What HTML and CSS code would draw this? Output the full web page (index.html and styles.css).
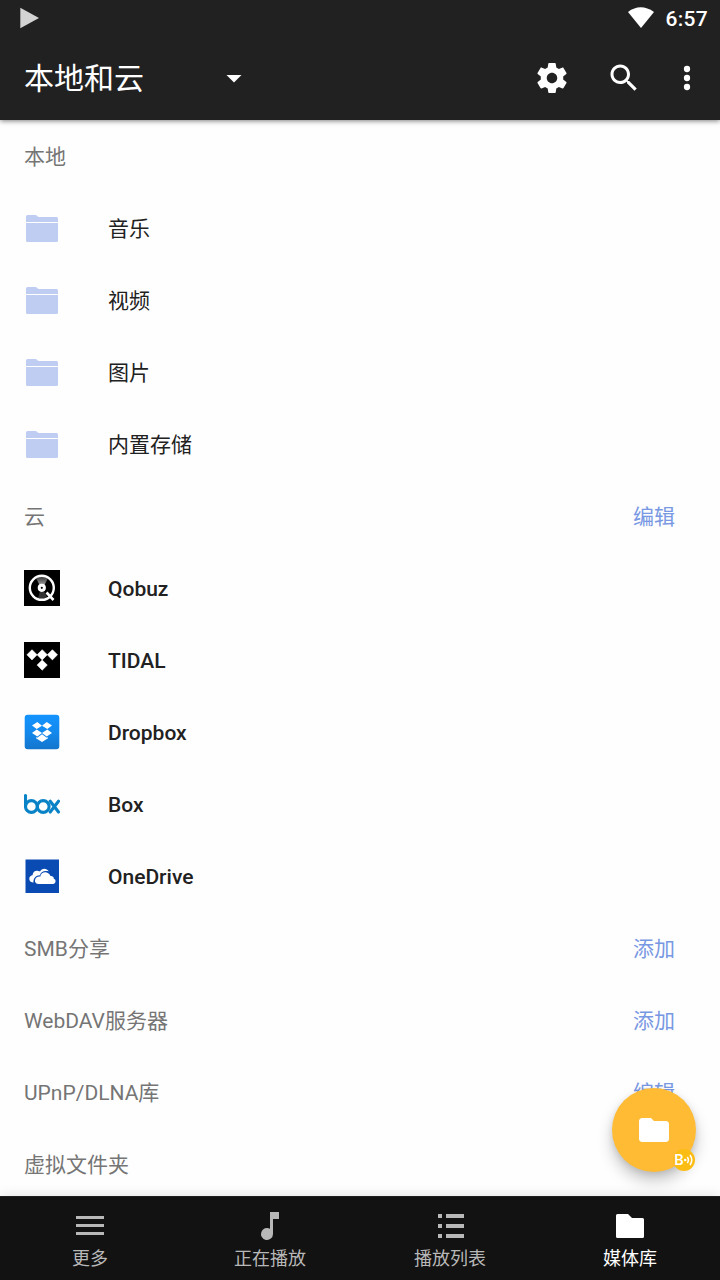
FILE: index.html
```html
<!DOCTYPE html>
<html lang="zh-CN">
<head>
    <meta charset="UTF-8">
    <meta name="viewport" content="width=device-width, initial-scale=1.0">
    <title>本地和云</title>
    <link rel="stylesheet" href="styles.css">
</head>
<body>

<!-- Shared icons -->
<svg class="defs" width="0" height="0">
    <symbol id="folder-split" viewBox="0 0 36 36">
        <path d="M2 7V6.500Q2 5 3.500 5H12L14.500 7H32.500Q34 7 34 8.500V12H2z"/>
        <path d="M2 13H34V30.500Q34 32 32.500 32H3.500Q2 32 2 30.500z"/>
    </symbol>
</svg>

<header>
    <div class="status-bar">
        <svg class="play" width="20" height="22" viewBox="0 0 20 22"><path d="M.3.700L19 11 .3 21.300z"/></svg>
        <svg class="wifi" width="28" height="22" viewBox="0 0 28 22"><path d="M1 5Q13.500-4.300 27 5L14 21z"/></svg>
        <span class="clock">6:57</span>
    </div>
    <div class="toolbar">
        <h1>本地和云</h1>
        <svg class="icon arrow" viewBox="0 0 24 24"><path d="M7 10l5 5 5-5z"/></svg>
        <svg class="icon settings" viewBox="0 0 24 24"><path d="M19.430 12.980c.04-.32.070-.64.070-.98s-.03-.66-.07-.98l2.110-1.650c.19-.15.240-.42.120-.64l-2-3.460c-.12-.22-.39-.3-.61-.22l-2.490 1c-.52-.4-1.080-.73-1.690-.98l-.38-2.650C14.460 2.180 14.250 2 14 2h-4c-.25 0-.46.180-.49.420l-.38 2.650c-.61.250-1.170.590-1.690.980l-2.490-1c-.23-.09-.49 0-.61.220l-2 3.460c-.13.220-.07.490.12.640l2.110 1.650c-.04.320-.07.650-.07.980s.03.660.070.980l-2.110 1.650c-.19.150-.24.420-.12.640l2 3.460c.12.220.39.300.61.220l2.490-1c.52.400 1.080.730 1.690.980l.38 2.650c.03.240.240.420.490.420h4c.25 0 .46-.18.490-.42l.38-2.650c.61-.25 1.170-.59 1.690-.98l2.490 1c.23.090.49 0 .61-.22l2-3.460c.12-.22.070-.49-.12-.64l-2.110-1.650zM12 15.500c-1.930 0-3.500-1.570-3.500-3.500s1.570-3.500 3.500-3.500 3.500 1.570 3.500 3.500-1.570 3.500-3.500 3.500z"/></svg>
        <svg class="icon search" viewBox="0 0 24 24"><path d="M15.500 14h-.79l-.28-.27C15.410 12.590 16 11.110 16 9.500 16 5.910 13.090 3 9.500 3S3 5.910 3 9.500 5.910 16 9.500 16c1.610 0 3.090-.59 4.230-1.570l.27.280v.79l5 4.990L20.490 19l-4.990-5zm-6 0C7.010 14 5 11.990 5 9.500S7.010 5 9.500 5 14 7.010 14 9.500 11.990 14 9.500 14z"/></svg>
        <svg class="icon more" viewBox="0 0 24 24"><circle cx="12" cy="6" r="2.100"/><circle cx="12" cy="12" r="2.100"/><circle cx="12" cy="18" r="2.100"/></svg>
    </div>
</header>

<main>
    <div class="row section"><span>本地</span></div>
    <div class="row"><svg class="icon folder"><use href="#folder-split"/></svg><span>音乐</span></div>
    <div class="row"><svg class="icon folder"><use href="#folder-split"/></svg><span>视频</span></div>
    <div class="row"><svg class="icon folder"><use href="#folder-split"/></svg><span>图片</span></div>
    <div class="row"><svg class="icon folder"><use href="#folder-split"/></svg><span>内置存储</span></div>

    <div class="row section"><span>云</span><a href="#">编辑</a></div>
    <div class="row cloud">
        <svg class="icon" viewBox="0 0 36 36">
            <defs>
                <linearGradient id="shine" x1="0" y1="0" x2="0" y2="1"><stop offset="0" stop-color="#333"/><stop offset="1" stop-color="#aaa"/></linearGradient>
            </defs>
            <rect width="36" height="36"/>
            <path d="M12 8Q18 5 24 8L20 16H16z" fill="url(#shine)"/>
            <path d="M16 21H20L23 27Q18 30 14 28z" fill="#333"/>
            <circle cx="17.800" cy="17.800" r="12" fill="none" stroke="#fff" stroke-width="2.400"/>
            <circle cx="17.800" cy="17.800" r="2.600" fill="none" stroke="#fff" stroke-width="3"/>
            <path d="M22.500 22.500L29.500 30" stroke="#fff" stroke-width="2.600"/>
        </svg>
        <span>Qobuz</span>
    </div>
    <div class="row cloud">
        <svg class="icon" viewBox="0 0 36 36">
            <rect width="36" height="36"/>
            <path fill="#fff" stroke="#fff" stroke-width=".6" d="M8 7.700l5.100 5.100L8 17.900l-5.100-5.100zM18.200 7.700l5.100 5.100-5.100 5.100-5.100-5.100zM28.400 7.700l5.100 5.100-5.100 5.100-5.100-5.100zM18.200 18l5.100 5.100-5.100 5.100-5.100-5.100z"/>
        </svg>
        <span>TIDAL</span>
    </div>
    <div class="row cloud">
        <svg class="icon" viewBox="0 0 36 36">
            <defs>
                <linearGradient id="blue" x1="0" y1="0" x2="0" y2="1"><stop offset="0" stop-color="#1494ff"/><stop offset=".5" stop-color="#1389ed"/><stop offset="1" stop-color="#1475cc"/></linearGradient>
            </defs>
            <rect x=".7" y=".7" width="34.600" height="34.600" rx="3" fill="url(#blue)"/>
            <path fill="#fff" d="M13.300 8L18 11.700 12.700 15 8 11.500zM22.700 8L28 11.500 23.300 15 18 11.700zM12.700 15.500L18 19 13.300 22.500 8 19zM23.300 15.500L28 19 22.700 22.500 18 19zM18 20.300L22.800 23.800 24 23.200V24.200L18 28 12 24.200V23.200L13.200 23.800z"/>
        </svg>
        <span>Dropbox</span>
    </div>
    <div class="row cloud">
        <svg class="icon" viewBox="0 0 36 36">
            <g fill="none" stroke="#0a83c6" stroke-width="3.100" stroke-linecap="round">
                <path d="M1.500 9.500V20.500"/>
                <circle cx="7.400" cy="20.500" r="5.900"/>
                <circle cx="19.200" cy="20.500" r="5.900"/>
                <path d="M26.200 15.200L34.500 26M34.500 15.200L26.200 26"/>
            </g>
        </svg>
        <span>Box</span>
    </div>
    <div class="row cloud">
        <svg class="icon" viewBox="0 0 36 36">
            <rect x="1.500" y="1.500" width="33.500" height="33.500" fill="#0a4bb3"/>
            <path fill="#fff" d="M9.500 24.500C6.500 24.800 5 22.500 5.300 20.300 5.500 18.500 7 17.300 8.500 17.200 9 14 11 12.500 13.500 12.800 14.800 13 15.500 13.500 16 13.500 17.500 10 22.500 9.500 24.800 13.300 20 12 16.500 14 16 17.200 12 17 9 20.500 9.500 24.500z"/>
            <path fill="#fff" d="M15.500 26C12 26 10.800 24.200 11 22.200 11.200 19.500 13.500 18.200 16.300 18.500 17 13.500 24.200 12.500 26.500 18 29 17.800 30 19.300 29.800 20.800 32.500 21.500 32 26 29 26z"/>
        </svg>
        <span>OneDrive</span>
    </div>

    <div class="row section"><span>SMB分享</span><a href="#">添加</a></div>
    <div class="row section"><span>WebDAV服务器</span><a href="#">添加</a></div>
    <div class="row section"><span>UPnP/DLNA库</span><a href="#">编辑</a></div>
    <div class="row section"><span>虚拟文件夹</span></div>
</main>

<button class="fab">
    <svg class="icon" viewBox="0 0 24 24"><path d="M10 4H4c-1.100 0-1.990.9-1.990 2L2 18c0 1.100.9 2 2 2h16c1.100 0 2-.9 2-2V8c0-1.100-.9-2-2-2h-8l-2-2z"/></svg>
    <span class="badge">B<svg width="10" height="14" viewBox="0 0 10 14"><circle cx="1.200" cy="7" r="1.300"/><path d="M3.300 4Q5.500 7 3.300 10M6 2Q9.600 7 6 12"/></svg></span>
</button>

<nav>
    <a href="#">
        <svg width="36" height="36" viewBox="0 0 36 36"><path d="M4 8h28v3H4zM4 16h28v3H4zM4 24h28v3H4z"/></svg>
        <span>更多</span>
    </a>
    <a href="#">
        <svg width="36" height="36" viewBox="0 0 36 36"><path d="M18 4h9v7h-6v15a6 6 0 1 1-3-5.200z"/></svg>
        <span>正在播放</span>
    </a>
    <a href="#">
        <svg width="36" height="36" viewBox="0 0 36 36"><path d="M6 6h4v4H6zM14 6h18v4H14zM6 16h4v4H6zM14 16h18v4H14zM6 26h4v4H6zM14 26h18v4H14z"/></svg>
        <span>播放列表</span>
    </a>
    <a href="#" class="active">
        <svg width="36" height="36" viewBox="0 0 36 36"><path d="M5.500 6H16L20 10H30.500Q32 10 32 11.500V28.500Q32 30 30.500 30H5.500Q4 30 4 28.500V7.500Q4 6 5.500 6z"/></svg>
        <span>媒体库</span>
    </a>
</nav>

</body>
</html>
```

FILE: styles.css
```css
body {
    font-family: Roboto, "Noto Sans CJK SC", sans-serif;
    margin: 0;
    height: 100vh;
    display: flex;
    flex-direction: column;
    overflow: hidden;
    background-color: #fefefe;
    color: #212121;
}
.defs {
    position: absolute;
}
a {
    text-decoration: none;
}
.icon {
    width: 36px;
    height: 36px;
    flex: none;
}
header {
    height: 120px;
    flex: none;
    background-color: #212121;
    color: #fff;
    fill: #fff;
    box-shadow: 0 1px 5px rgba(0, 0, 0, 0.5);
    z-index: 1;
}
.status-bar {
    height: 36px;
    display: flex;
    align-items: center;
    padding: 0 12px 0 20px;
}
.play {
    fill: #d3d3d3;
}
.wifi {
    margin-left: auto;
    margin-right: 10px;
}
.clock {
    font-size: 21px;
    font-weight: 500;
    letter-spacing: 0.3px;
    line-height: 36px;
    padding-top: 2px;
}
.toolbar {
    height: 84px;
    display: flex;
    align-items: center;
    padding: 0 15px 0 24px;
}
h1 {
    width: 192px;
    margin: 0;
    padding-top: 2px;
    font-size: 30px;
    font-weight: 400;
    line-height: 44px;
}
.settings {
    margin-left: auto;
}
.search {
    margin-left: 36px;
}
.more {
    margin-left: 27px;
}
main {
    flex: 1;
    min-height: 0;
    overflow: hidden;
}
.row {
    height: 72px;
    box-sizing: border-box;
    padding: 0 45px 0 24px;
    display: flex;
    align-items: center;
    font-size: 21px;
    line-height: 30px;
}
.row span,
.row a {
    padding-top: 2px;
}
.row .icon {
    margin-right: 48px;
}
.folder {
    fill: #bfcdf3;
}
.cloud {
    font-weight: 500;
}
.section {
    justify-content: space-between;
    color: #757575;
}
.section a {
    color: #7898e3;
}
.fab {
    position: absolute;
    right: 24px;
    bottom: 108px;
    width: 84px;
    height: 84px;
    padding: 0;
    border: none;
    border-radius: 50%;
    background-color: #ffbb33;
    fill: #fff;
    display: flex;
    align-items: center;
    justify-content: center;
    box-shadow: 0 9px 15px rgba(0, 0, 0, 0.22), 0 2px 6px rgba(0, 0, 0, 0.1);
}
.badge {
    position: absolute;
    right: 1px;
    bottom: 1px;
    width: 22px;
    height: 22px;
    border-radius: 50%;
    background-color: #fbbc14;
    color: #fff;
    font: 500 15px/22px Roboto, sans-serif;
    display: flex;
    align-items: center;
    justify-content: center;
}
.badge svg {
    flex: none;
}
.badge path {
    fill: none;
    stroke: #fff;
    stroke-width: 1.5;
}
nav {
    height: 84px;
    flex: none;
    box-sizing: border-box;
    padding-top: 11px;
    display: flex;
    background-color: #121212;
    border-top: 1px solid #1f1f1f;
    box-shadow: 0 0 12px rgba(0, 0, 0, 0.12);
}
nav a {
    flex: 1;
    display: flex;
    flex-direction: column;
    align-items: center;
    color: #b8b8b8;
    fill: #b8b8b8;
    font-size: 18px;
    line-height: 30px;
}
nav .active {
    color: #fff;
    fill: #fff;
}
```
